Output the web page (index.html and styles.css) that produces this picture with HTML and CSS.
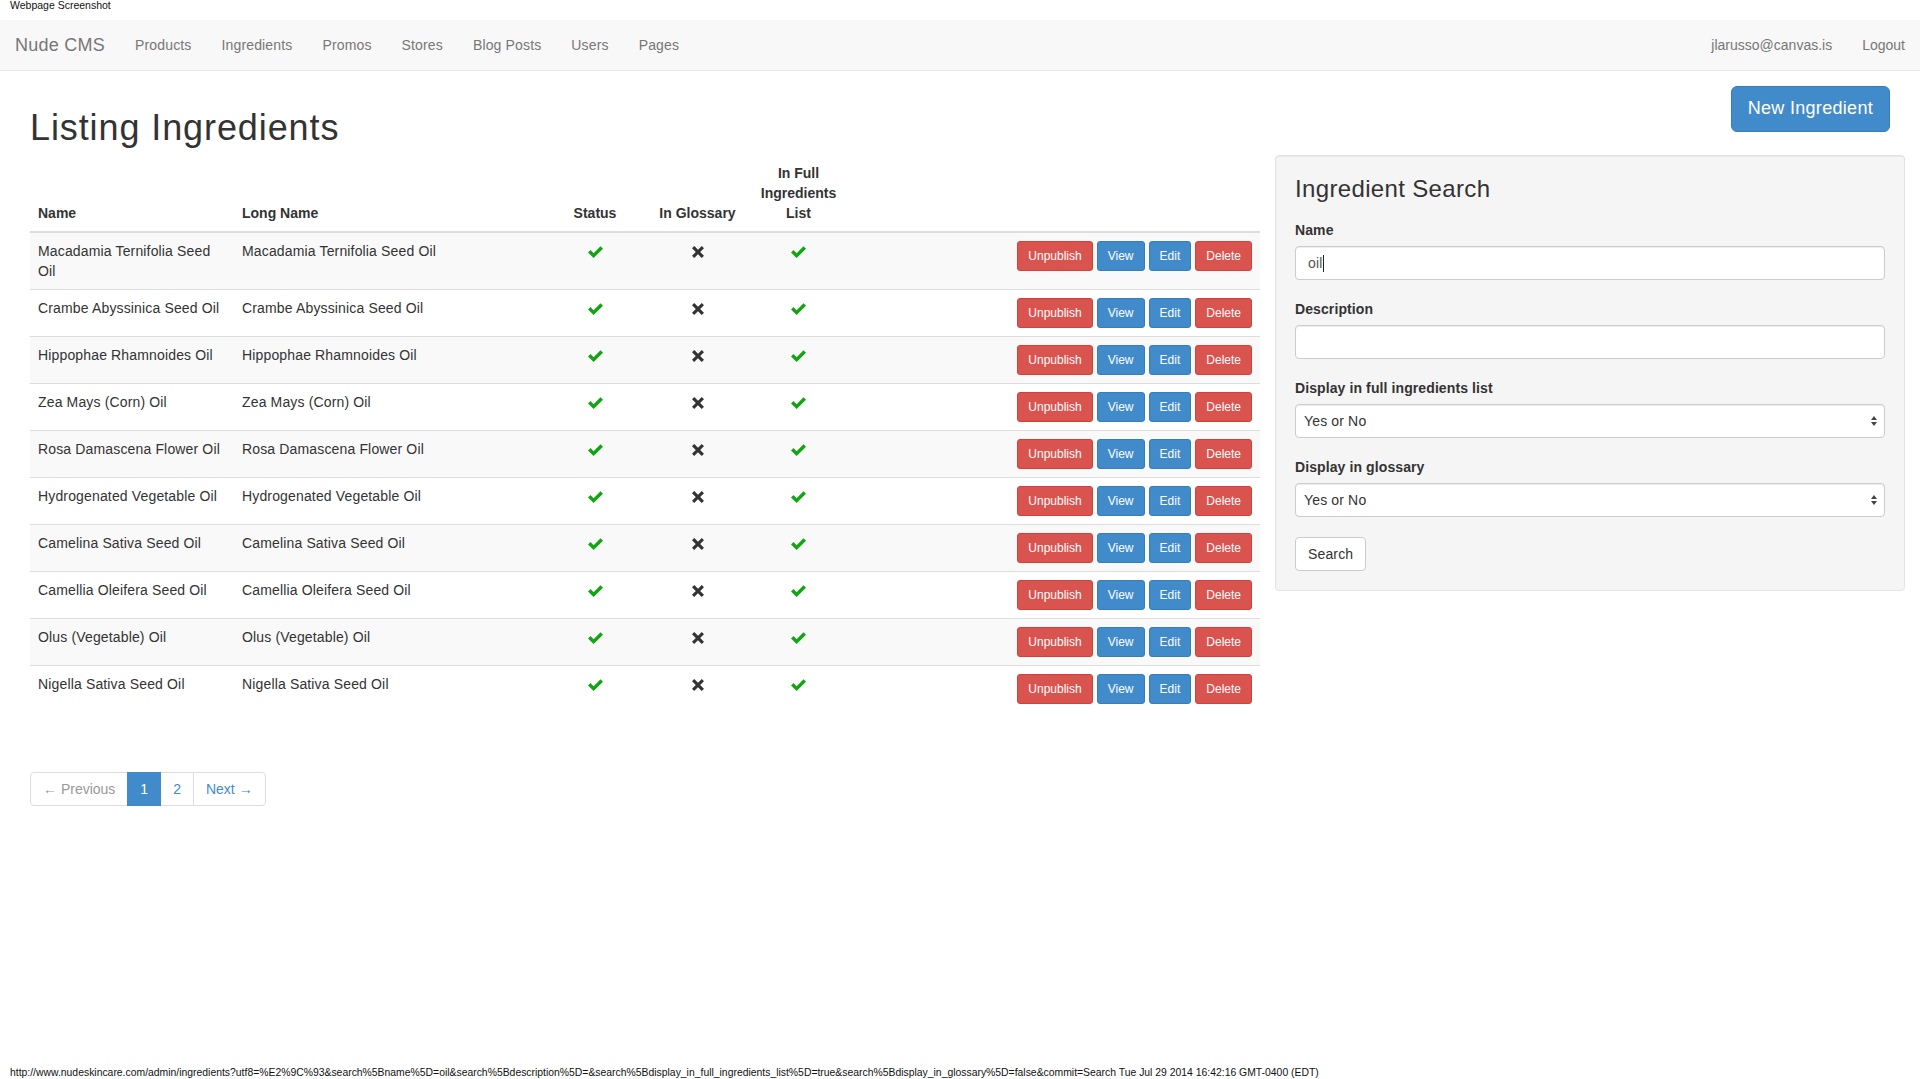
FILE: index.html
```html
<!DOCTYPE html>
<html lang="en">
<head>
<meta charset="utf-8">
<title>Nude CMS - Listing Ingredients</title>
<link rel="stylesheet" href="styles.css">
</head>
<body>
<svg class="defs" width="0" height="0" aria-hidden="true">
  <symbol id="i-ok" viewBox="0 0 15 12"><path d="M0 6.6 L2.5 4.1 L5.6 7.2 L12.5 0.2 L15 2.7 L5.6 12 Z"/></symbol>
  <symbol id="i-no" viewBox="0 0 12 12"><path d="M2.2 2.2 L9.8 9.8 M9.8 2.2 L2.2 9.8" stroke-width="3.1" stroke-linecap="square"/></symbol>
</svg>

<div class="shot-title">Webpage Screenshot</div>

<nav class="navbar">
  <a class="brand" href="#">Nude CMS</a>
  <ul class="nav">
    <li><a href="#">Products</a></li>
    <li><a href="#">Ingredients</a></li>
    <li><a href="#">Promos</a></li>
    <li><a href="#">Stores</a></li>
    <li><a href="#">Blog Posts</a></li>
    <li><a href="#">Users</a></li>
    <li><a href="#">Pages</a></li>
  </ul>
  <ul class="nav nav-right">
    <li><a href="#">jlarusso@canvas.is</a></li>
    <li><a href="#">Logout</a></li>
  </ul>
</nav>

<main class="page">
  <div class="title-row">
    <h1>Listing Ingredients</h1>
    <a class="btn btn-primary btn-lg" href="#">New Ingredient</a>
  </div>

  <div class="content">
    <section class="main">
      <table class="table">
        <colgroup>
          <col class="c-name"><col class="c-long"><col class="c-status"><col class="c-gloss"><col class="c-full"><col class="c-actions">
        </colgroup>
        <thead>
          <tr>
            <th>Name</th>
            <th>Long Name</th>
            <th class="center">Status</th>
            <th class="center nowrap">In Glossary</th>
            <th class="center">In Full Ingredients List</th>
            <th></th>
          </tr>
        </thead>
        <tbody>
          <tr>
            <td>Macadamia Ternifolia Seed Oil</td><td>Macadamia Ternifolia Seed Oil</td>
            <td class="center"><svg class="ic ok"><use href="#i-ok"/></svg></td>
            <td class="center"><svg class="ic no"><use href="#i-no"/></svg></td>
            <td class="center"><svg class="ic ok"><use href="#i-ok"/></svg></td>
            <td class="actions"><a class="btn btn-sm btn-danger" href="#">Unpublish</a> <a class="btn btn-sm btn-primary" href="#">View</a> <a class="btn btn-sm btn-primary" href="#">Edit</a> <a class="btn btn-sm btn-danger" href="#">Delete</a></td>
          </tr>
          <tr>
            <td>Crambe Abyssinica Seed Oil</td><td>Crambe Abyssinica Seed Oil</td>
            <td class="center"><svg class="ic ok"><use href="#i-ok"/></svg></td>
            <td class="center"><svg class="ic no"><use href="#i-no"/></svg></td>
            <td class="center"><svg class="ic ok"><use href="#i-ok"/></svg></td>
            <td class="actions"><a class="btn btn-sm btn-danger" href="#">Unpublish</a> <a class="btn btn-sm btn-primary" href="#">View</a> <a class="btn btn-sm btn-primary" href="#">Edit</a> <a class="btn btn-sm btn-danger" href="#">Delete</a></td>
          </tr>
          <tr>
            <td>Hippophae Rhamnoides Oil</td><td>Hippophae Rhamnoides Oil</td>
            <td class="center"><svg class="ic ok"><use href="#i-ok"/></svg></td>
            <td class="center"><svg class="ic no"><use href="#i-no"/></svg></td>
            <td class="center"><svg class="ic ok"><use href="#i-ok"/></svg></td>
            <td class="actions"><a class="btn btn-sm btn-danger" href="#">Unpublish</a> <a class="btn btn-sm btn-primary" href="#">View</a> <a class="btn btn-sm btn-primary" href="#">Edit</a> <a class="btn btn-sm btn-danger" href="#">Delete</a></td>
          </tr>
          <tr>
            <td>Zea Mays (Corn) Oil</td><td>Zea Mays (Corn) Oil</td>
            <td class="center"><svg class="ic ok"><use href="#i-ok"/></svg></td>
            <td class="center"><svg class="ic no"><use href="#i-no"/></svg></td>
            <td class="center"><svg class="ic ok"><use href="#i-ok"/></svg></td>
            <td class="actions"><a class="btn btn-sm btn-danger" href="#">Unpublish</a> <a class="btn btn-sm btn-primary" href="#">View</a> <a class="btn btn-sm btn-primary" href="#">Edit</a> <a class="btn btn-sm btn-danger" href="#">Delete</a></td>
          </tr>
          <tr>
            <td>Rosa Damascena Flower Oil</td><td>Rosa Damascena Flower Oil</td>
            <td class="center"><svg class="ic ok"><use href="#i-ok"/></svg></td>
            <td class="center"><svg class="ic no"><use href="#i-no"/></svg></td>
            <td class="center"><svg class="ic ok"><use href="#i-ok"/></svg></td>
            <td class="actions"><a class="btn btn-sm btn-danger" href="#">Unpublish</a> <a class="btn btn-sm btn-primary" href="#">View</a> <a class="btn btn-sm btn-primary" href="#">Edit</a> <a class="btn btn-sm btn-danger" href="#">Delete</a></td>
          </tr>
          <tr>
            <td>Hydrogenated Vegetable Oil</td><td>Hydrogenated Vegetable Oil</td>
            <td class="center"><svg class="ic ok"><use href="#i-ok"/></svg></td>
            <td class="center"><svg class="ic no"><use href="#i-no"/></svg></td>
            <td class="center"><svg class="ic ok"><use href="#i-ok"/></svg></td>
            <td class="actions"><a class="btn btn-sm btn-danger" href="#">Unpublish</a> <a class="btn btn-sm btn-primary" href="#">View</a> <a class="btn btn-sm btn-primary" href="#">Edit</a> <a class="btn btn-sm btn-danger" href="#">Delete</a></td>
          </tr>
          <tr>
            <td>Camelina Sativa Seed Oil</td><td>Camelina Sativa Seed Oil</td>
            <td class="center"><svg class="ic ok"><use href="#i-ok"/></svg></td>
            <td class="center"><svg class="ic no"><use href="#i-no"/></svg></td>
            <td class="center"><svg class="ic ok"><use href="#i-ok"/></svg></td>
            <td class="actions"><a class="btn btn-sm btn-danger" href="#">Unpublish</a> <a class="btn btn-sm btn-primary" href="#">View</a> <a class="btn btn-sm btn-primary" href="#">Edit</a> <a class="btn btn-sm btn-danger" href="#">Delete</a></td>
          </tr>
          <tr>
            <td>Camellia Oleifera Seed Oil</td><td>Camellia Oleifera Seed Oil</td>
            <td class="center"><svg class="ic ok"><use href="#i-ok"/></svg></td>
            <td class="center"><svg class="ic no"><use href="#i-no"/></svg></td>
            <td class="center"><svg class="ic ok"><use href="#i-ok"/></svg></td>
            <td class="actions"><a class="btn btn-sm btn-danger" href="#">Unpublish</a> <a class="btn btn-sm btn-primary" href="#">View</a> <a class="btn btn-sm btn-primary" href="#">Edit</a> <a class="btn btn-sm btn-danger" href="#">Delete</a></td>
          </tr>
          <tr>
            <td>Olus (Vegetable) Oil</td><td>Olus (Vegetable) Oil</td>
            <td class="center"><svg class="ic ok"><use href="#i-ok"/></svg></td>
            <td class="center"><svg class="ic no"><use href="#i-no"/></svg></td>
            <td class="center"><svg class="ic ok"><use href="#i-ok"/></svg></td>
            <td class="actions"><a class="btn btn-sm btn-danger" href="#">Unpublish</a> <a class="btn btn-sm btn-primary" href="#">View</a> <a class="btn btn-sm btn-primary" href="#">Edit</a> <a class="btn btn-sm btn-danger" href="#">Delete</a></td>
          </tr>
          <tr>
            <td>Nigella Sativa Seed Oil</td><td>Nigella Sativa Seed Oil</td>
            <td class="center"><svg class="ic ok"><use href="#i-ok"/></svg></td>
            <td class="center"><svg class="ic no"><use href="#i-no"/></svg></td>
            <td class="center"><svg class="ic ok"><use href="#i-ok"/></svg></td>
            <td class="actions"><a class="btn btn-sm btn-danger" href="#">Unpublish</a> <a class="btn btn-sm btn-primary" href="#">View</a> <a class="btn btn-sm btn-primary" href="#">Edit</a> <a class="btn btn-sm btn-danger" href="#">Delete</a></td>
          </tr>
        </tbody>
      </table>

      <ul class="pagination">
        <li class="disabled"><span>&larr; Previous</span></li>
        <li class="active"><span>1</span></li>
        <li><a href="#">2</a></li>
        <li><a href="#">Next &rarr;</a></li>
      </ul>
    </section>

    <aside class="well">
      <h3>Ingredient Search</h3>
      <form class="search-form">
        <div class="form-group">
          <label>Name</label>
          <div class="form-control">oil<span class="text-caret"></span></div>
        </div>
        <div class="form-group">
          <label for="desc">Description</label>
          <input id="desc" class="form-control" type="text">
        </div>
        <div class="form-group">
          <label for="full">Display in full ingredients list</label>
          <div class="select-wrap">
            <select id="full" class="form-control select"><option>Yes or No</option></select>
            <svg class="select-arrows" viewBox="0 0 6 10"><path d="M3 0 L6 4 L0 4 Z M3 10 L6 6 L0 6 Z"/></svg>
          </div>
        </div>
        <div class="form-group">
          <label for="gloss">Display in glossary</label>
          <div class="select-wrap">
            <select id="gloss" class="form-control select"><option>Yes or No</option></select>
            <svg class="select-arrows" viewBox="0 0 6 10"><path d="M3 0 L6 4 L0 4 Z M3 10 L6 6 L0 6 Z"/></svg>
          </div>
        </div>
        <button type="button" class="btn btn-default">Search</button>
      </form>
    </aside>
  </div>
</main>

<footer class="shot-url">http://www.nudeskincare.com/admin/ingredients?utf8=%E2%9C%93&amp;search%5Bname%5D=oil&amp;search%5Bdescription%5D=&amp;search%5Bdisplay_in_full_ingredients_list%5D=true&amp;search%5Bdisplay_in_glossary%5D=false&amp;commit=Search Tue Jul 29 2014 16:42:16 GMT-0400 (EDT)</footer>
</body>
</html>
```

FILE: styles.css
```css
* { box-sizing: border-box; }

html, body { height: 100%; }

body {
  margin: 0;
  min-height: 1079px;
  display: flex;
  flex-direction: column;
  font-family: "Liberation Sans", Arial, sans-serif;
  font-size: 14px;
  line-height: 1.428571;
  letter-spacing: 0.15px;
  color: #333;
  background: #fff;
}

.defs { position: absolute; width: 0; height: 0; overflow: hidden; }

.shot-title {
  height: 20px;
  padding: 0 0 0 10px;
  font-size: 10.5px;
  line-height: 11px;
  letter-spacing: 0;
  color: #111;
}

/* Navbar */
.navbar {
  display: flex;
  align-items: stretch;
  height: 51px;
  background: #f8f8f8;
  border-bottom: 1px solid #e7e7e7;
}
.brand {
  padding: 0 15px;
  font-size: 18px;
  line-height: 50px;
  letter-spacing: 0.25px;
  color: #777;
  text-decoration: none;
}
.nav {
  display: flex;
  list-style: none;
  margin: 0;
  padding: 0;
}
.nav a {
  display: block;
  padding: 0 15px;
  line-height: 50px;
  letter-spacing: 0.15px;
  color: #777;
  text-decoration: none;
}
.nav-right { margin-left: auto; }
.nav-right a { letter-spacing: 0; }

/* Page */
.page {
  padding: 0 15px 0 30px;
}
.title-row {
  display: flex;
  justify-content: space-between;
  align-items: flex-start;
}
.title-row h1 {
  margin: 37px 0 7px;
  font-size: 36px;
  font-weight: 400;
  line-height: 1.1;
  letter-spacing: 0.9px;
  color: #333;
}

.content {
  display: flex;
  align-items: flex-start;
  gap: 15px;
}
.main {
  flex: none;
  width: 1230px;
}

/* Buttons */
.btn {
  display: inline-block;
  padding: 6px 12px;
  font-family: inherit;
  font-size: 14px;
  line-height: 20px;
  letter-spacing: inherit;
  text-align: center;
  white-space: nowrap;
  vertical-align: middle;
  border: 1px solid transparent;
  border-radius: 4px;
  text-decoration: none;
  cursor: pointer;
}
.btn-lg {
  margin: 15px 15px 0 0;
  padding: 10px 16px;
  font-size: 18px;
  line-height: 1.33;
  letter-spacing: 0.3px;
  border-radius: 6px;
}
.btn-sm {
  padding: 5px 10px;
  font-size: 12px;
  line-height: 1.5;
  letter-spacing: 0;
  border-radius: 3px;
}
.btn-primary { color: #fff; background: #428bca; border-color: #357ebd; }
.btn-danger { color: #fff; background: #d9534f; border-color: #d43f3a; }
.btn-default { color: #333; background: #fff; border-color: #ccc; }

/* Table */
.table {
  width: 100%;
  margin: 0 0 60px;
  border-collapse: collapse;
  border-spacing: 0;
  table-layout: fixed;
}
.c-name { width: 204px; }
.c-long { width: 306px; }
.c-status { width: 110px; }
.c-gloss { width: 95px; }
.c-full { width: 107px; }
.c-actions { width: 408px; }

.table th,
.table td {
  padding: 8px;
  line-height: 20px;
  vertical-align: top;
  border-top: 1px solid #ddd;
  text-align: left;
}
.table thead th {
  vertical-align: bottom;
  border-top: 0;
  border-bottom: 2px solid #ddd;
  font-weight: bold;
  letter-spacing: 0;
}
.table tbody tr:nth-child(odd) td { background: #f9f9f9; }
.table .center { text-align: center; }
.table .nowrap { white-space: nowrap; }
.table .actions { text-align: right; white-space: nowrap; }

.ic { display: inline-block; vertical-align: top; margin-top: 5px; }
.ic.ok { width: 15px; height: 12px; fill: #12a512; }
.ic.no { width: 12px; height: 12px; stroke: #333; fill: none; }

/* Pagination */
.pagination {
  display: flex;
  margin: 0;
  padding: 0;
  list-style: none;
  letter-spacing: 0;
}
.pagination li > a,
.pagination li > span {
  display: block;
  padding: 6px 12px;
  margin-left: -1px;
  line-height: 20px;
  color: #428bca;
  text-decoration: none;
  background: #fff;
  border: 1px solid #ddd;
}
.pagination li:first-child > span {
  margin-left: 0;
  border-radius: 4px 0 0 4px;
}
.pagination li:last-child > a { border-radius: 0 4px 4px 0; }
.pagination .disabled > span { color: #999; }
.pagination .active > span {
  color: #fff;
  background: #428bca;
  border-color: #428bca;
  position: relative;
  z-index: 1;
}

/* Well / search */
.well {
  flex: 1;
  padding: 19px;
  background: #f5f5f5;
  border: 1px solid #e3e3e3;
  border-radius: 4px;
  box-shadow: inset 0 1px 1px rgba(0,0,0,.05);
}
.well h3 {
  margin: 1px 0 19px;
  font-size: 24px;
  font-weight: 400;
  line-height: 1.1;
  letter-spacing: 0.35px;
}
.form-group { margin-bottom: 20px; }
.form-group label {
  display: block;
  margin-bottom: 5px;
  font-weight: bold;
  letter-spacing: 0.1px;
}
.form-control {
  display: block;
  width: 100%;
  height: 34px;
  padding: 6px 12px;
  font-family: inherit;
  font-size: 14px;
  line-height: 20px;
  letter-spacing: inherit;
  color: #555;
  background: #fff;
  border: 1px solid #ccc;
  border-radius: 4px;
  box-shadow: inset 0 1px 1px rgba(0,0,0,.075);
}
.text-caret {
  display: inline-block;
  width: 1px;
  height: 17px;
  margin-left: 1px;
  vertical-align: -4px;
  background: #222;
}
.select-wrap { position: relative; }
.select {
  -webkit-appearance: none;
  appearance: none;
  padding: 6px 24px 6px 8px;
  color: #333;
}
.select-arrows {
  position: absolute;
  right: 8px;
  top: 12px;
  width: 6px;
  height: 10px;
  fill: #444;
  pointer-events: none;
}

/* print footer */
.shot-url {
  margin-top: auto;
  padding: 0 0 0 10px;
  font-size: 10.4px;
  line-height: 12px;
  letter-spacing: 0;
  color: #111;
  white-space: nowrap;
}
```
